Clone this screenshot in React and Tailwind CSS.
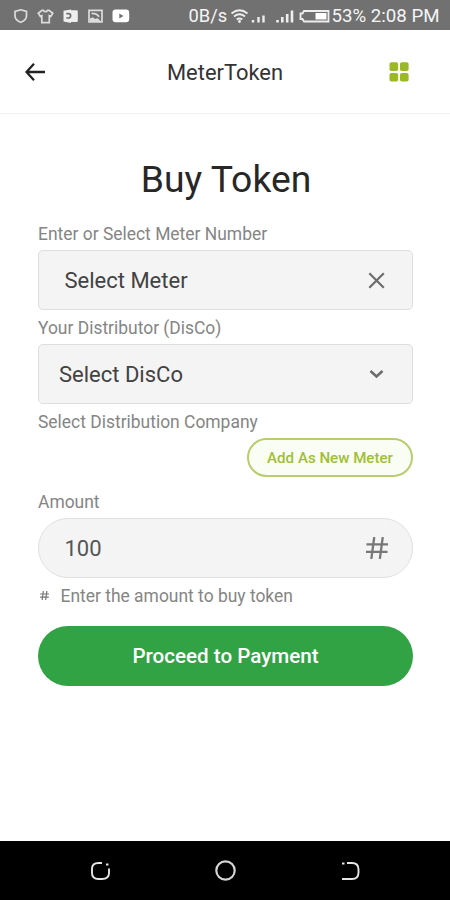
function StatusIcons() {
  return (
    <svg width="120" height="20" viewBox="10 0 120 20" fill="none" stroke="#dcdcdc" strokeWidth="1.7">
      <path d="M20.700 4.800 26.500 6.500v4.500c0 3-2.400 5-5.800 6.300C17.400 16 15 14 15 11V6.500z" />
      <path d="M42 5.300 38.300 8.300l2 3.200 1.500-.8v7h7.500v-7l1.500.8 2-3.200L49 5.300h-1.500c-.8 1.800-3.200 1.800-4 0z" />
      <path d="M63.500 5.800 71 4.500V18L63.500 16.500zM71 5.300h5.500q1.300 0 1.300 1.300v9.200q0 1.300-1.300 1.300H71z" fill="#eee" stroke="none" />
      <path d="M66.300 8.700h2.200a1.900 1.900 0 0 1 0 4.300h-2.200" stroke="#707070" />
      <path d="M89 5.300h13v11.500H89z" />
      <path d="M91.500 8.300c4.500 0 6.500 1.200 7.500 3.500" />
      <path d="M90 16.500v-3l2.500-1.300 3 1.800 2-1 3.500 3.500z" fill="#dcdcdc" stroke="none" />
      <rect x="112.500" y="4.500" width="16.700" height="12.800" rx="3.200" fill="#fff" stroke="none" />
      <path d="m119.300 8.400 4.200 2.500-4.200 2.500z" fill="#707070" stroke="none" />
    </svg>
  );
}

function SignalIcons() {
  return (
    <svg width="102" height="20" viewBox="0 0 102 20" fill="none" stroke="#eee" strokeWidth="1.800">
      <path d="M.5 8.500q8-6.500 16 0M3 11.500q5.500-4.500 11 0M5.700 14.500q2.800-2 5.600 0" />
      <circle cx="8.500" cy="16.500" r="1.400" fill="#eee" stroke="none" />
      <path d="M22 17.500v-2.500M27.500 17.500v-5.500M32.500 17.500v-7" strokeWidth="2.400" />
      <path d="M46.500 17.500v-2.500M51.300 17.500v-5.500M56.200 17.500v-8.500M61 17.500v-12" strokeWidth="2.600" />
      <path d="M73 6h24.500v10.500H73l-1.500-2.500H69.500V8.500h2z" />
      <path d="M84.500 8h11v6.500h-11z" fill="#fff" stroke="none" />
    </svg>
  );
}

function StatusBar() {
  return (
    <div className="flex h-[30px] shrink-0 items-center bg-[#717171] pl-[10px] text-[18.3px] text-[#f5f5f5]">
      <StatusIcons />
      <span className="ml-[58.5px] w-[42px] pt-[2px] whitespace-nowrap">0B/s</span>
      <SignalIcons />
      <span className="-ml-px pt-[3px] text-[18.7px] whitespace-nowrap">53% 2:08 PM</span>
    </div>
  );
}

function Header() {
  return (
    <header className="grid h-[84px] shrink-0 grid-cols-[1fr_auto_1fr] items-center border-b border-[#f3f3f3] pr-[41px] pl-[25px]">
      <svg width="21" height="20" viewBox="0 0 21 20" fill="none" stroke="#222" strokeWidth="2.300">
        <path d="M20 10H2M9 1.800 1.500 10 9 18.200" />
      </svg>
      <h2 className="pt-[3px] pl-[16px] text-[21.9px] text-[#333]">MeterToken</h2>
      <svg className="justify-self-end" width="20" height="20" viewBox="0 0 20 20" fill="#9ab925">
        <rect x=".5" y=".3" width="8.600" height="8.800" rx="1.800" />
        <rect x="11" y=".3" width="8.600" height="8.800" rx="1.800" />
        <rect x=".5" y="10.900" width="8.600" height="8.600" rx="1.800" />
        <rect x="11" y="10.900" width="8.600" height="8.600" rx="1.800" />
      </svg>
    </header>
  );
}

function HashIcon({ size, width }) {
  return (
    <svg width={size} height={size} viewBox="0 0 24 24" fill="none" stroke="#777" strokeWidth={width}>
      <path d="M.5 8H24M0 16.200h23.500M9 0 5.800 24M18.300 0l-3.200 24" />
    </svg>
  );
}

function Label({ children }) {
  return (
    <div className="flex h-[34px] items-center pt-[2px] pl-[.5px] text-[17.45px] text-[#858585]">{children}</div>
  );
}

function Field({ children }) {
  return (
    <div className="flex h-[60px] items-center justify-between rounded-[5px] border-[1.5px] border-[#dedede] bg-[#f4f4f4] text-[22px] text-[#424242]">
      {children}
    </div>
  );
}

function NavBar() {
  return (
    <nav className="flex h-[59px] shrink-0 items-center justify-between bg-black px-[90px]">
      <svg width="20" height="20" viewBox="0 0 20 20" fill="none" stroke="#e5e5e5" strokeWidth="1.900">
        <path d="M12 2H8.500Q2 2 2 8v4q0 6 6.500 6h3.500q7 0 7-6V7.500M16 3.500h2.500" />
      </svg>
      <svg width="21" height="21" viewBox="0 0 21 21" fill="none" stroke="#d5d5d5" strokeWidth="2.200">
        <circle cx="10.500" cy="10.500" r="9.200" />
      </svg>
      <svg width="20" height="20" viewBox="0 0 20 20" fill="none" stroke="#e5e5e5" strokeWidth="1.900">
        <path d="M7 2h5q6.500 0 6.500 6.500v3q0 6.500-6.500 6.500H2M2 2.500h2.500" />
      </svg>
    </nav>
  );
}

export default function App() {
  return (
    <div className="flex h-[900px] w-[450px] flex-col overflow-hidden bg-white font-[Roboto,sans-serif]">
      <StatusBar />
      <Header />
      <main className="flex grow flex-col px-[37.5px] pt-[40px]">
        <h1 className="h-[62px] pl-[2px] text-center text-[37.3px] leading-[51px] text-[#272727]">Buy Token</h1>
        <Label>Enter or Select Meter Number</Label>
        <Field>
          <span className="ml-[26px]">Select Meter</span>
          <svg className="mr-[26.5px]" width="17" height="17" viewBox="0 0 17 17" stroke="#6d6d6d" strokeWidth="2.200">
            <path d="m1.300 1.300 14.500 14.500M15.800 1.300 1.300 15.800" />
          </svg>
        </Field>
        <Label>Your Distributor (DisCo)</Label>
        <Field>
          <span className="ml-[20.5px]">Select DisCo</span>
          <svg className="mr-[27.5px]" width="15" height="10" viewBox="0 0 15 10" fill="none" stroke="#6d6d6d" strokeWidth="2.600">
            <path d="m1.500 2 6 5.500 6-5.500" />
          </svg>
        </Field>
        <Label>Select Distribution Company</Label>
        <button className="h-[39px] w-[166px] self-end rounded-full border-2 border-[#b8cc70] bg-[#fafdf3] pt-[1px] pl-[1px] text-[15.1px] font-medium text-[#a0bf35]">
          Add As New Meter
        </button>
        <div className="mt-[7px]">
          <Label>Amount</Label>
        </div>
        <div className="flex h-[60px] items-center justify-between rounded-full border-[1.5px] border-[#e0e0e0] bg-[#f4f4f4] pr-[23.5px] pl-[26px] text-[22px] text-[#555]">
          <span>100</span>
          <HashIcon size={22} width={2.5} />
        </div>
        <div className="flex h-[36px] items-center gap-[12px] pl-[2px] text-[17.45px] text-[#858585]">
          <span className="pb-[2px]"><HashIcon size={9} width={3.2} /></span>
          <span>Enter the amount to buy token</span>
        </div>
        <button className="mt-[12px] h-[60px] shrink-0 rounded-full bg-[#31a344] pt-[1px] pl-[1px] text-[20.6px] font-medium text-white">
          Proceed to Payment
        </button>
      </main>
      <NavBar />
    </div>
  );
}
